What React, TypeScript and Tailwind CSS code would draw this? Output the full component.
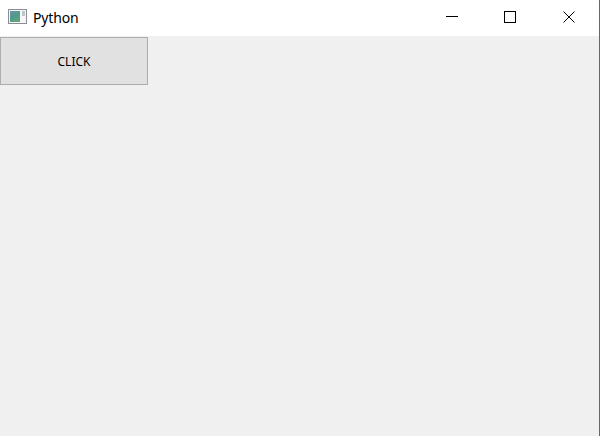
export default function App() {
  return (
    <div className="flex h-[436px] w-[600px] flex-col border-r border-[#1f7ac4] bg-[#f0f0f0] font-['Noto_Sans',sans-serif]">
      <div className="flex h-[36px] items-start justify-between bg-white">
        <div className="flex items-start pl-2 pt-[9px]">
          <svg width="19" height="15" viewBox="0 0 19 15" className="mr-[6px]">
            <defs>
              <linearGradient id="pane" x1="0" y1="0" x2="0.4" y2="1">
                <stop offset="0" stopColor="#6f94a8" />
                <stop offset="0.6" stopColor="#4f9a8c" />
                <stop offset="1" stopColor="#5fa57c" />
              </linearGradient>
            </defs>
            <rect x="0.5" y="0.5" width="18" height="14" fill="#f6f6f6" stroke="#8d8d96" />
            <rect x="2" y="2" width="10" height="11" fill="url(#pane)" />
            <rect x="14" y="2" width="3" height="5" fill="#b9c9c6" />
          </svg>
          <span className="pt-px tracking-[-0.15px] text-[14px] leading-[15px] text-black">Python</span>
        </div>
        <div className="flex items-start pr-[24px] pt-[11px]">
          <svg width="12" height="12" viewBox="0 0 12 12"><path d="M0 5.5H12" stroke="#000" /></svg>
          <svg width="12" height="12" viewBox="0 0 12 12" className="ml-[46px]"><rect x="0.5" y="0.5" width="11" height="11" fill="none" stroke="#000" /></svg>
          <svg width="12" height="12" viewBox="0 0 12 12" className="ml-[47px]"><path d="M0.5 0.5L11.5 11.5M11.5 0.5L0.5 11.5" stroke="#000" /></svg>
        </div>
      </div>
      <div className="flex-1 pt-px">
        <button className="flex h-[48px] w-[148px] items-center justify-center border border-[#adadad] bg-[#e1e1e1] pt-[2px] text-[12px] text-black">
          CLICK
        </button>
      </div>
    </div>
  );
}
